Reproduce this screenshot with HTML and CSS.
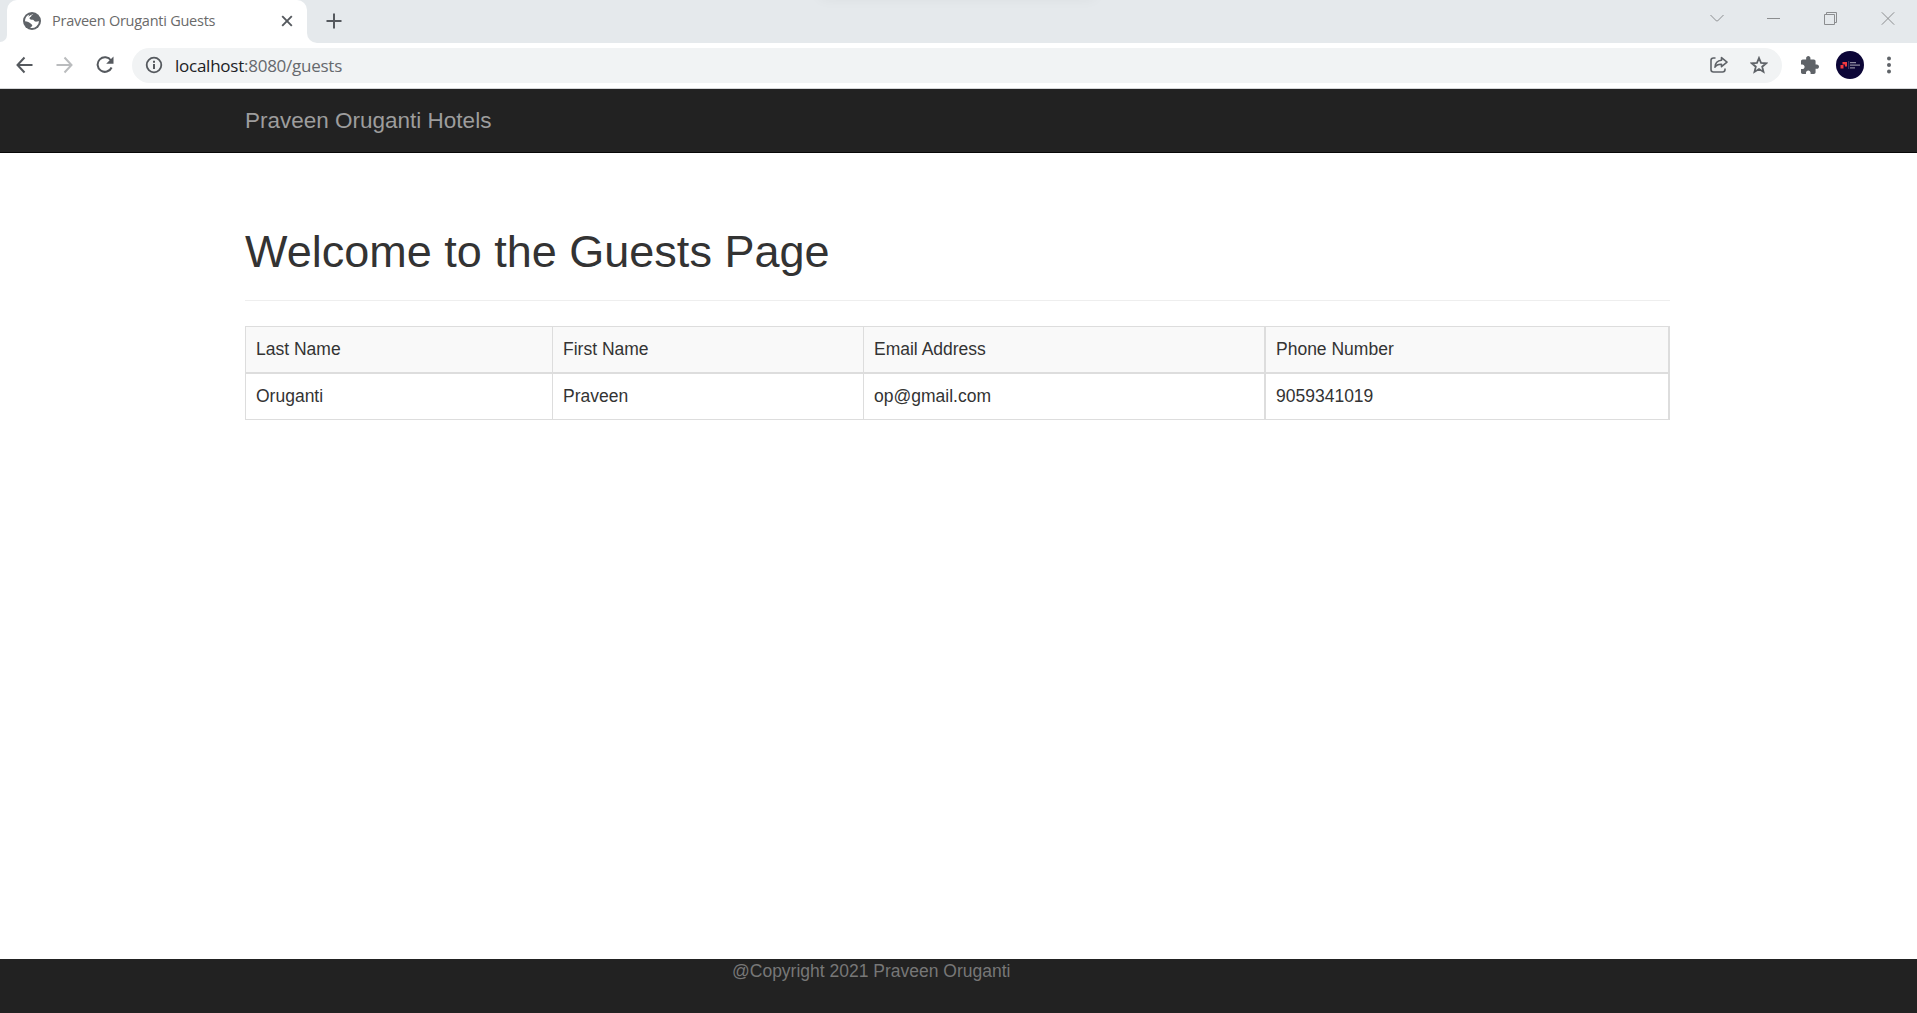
FILE: index.html
```html
<!DOCTYPE html>
<html lang="en">
<head>
<meta charset="utf-8">
<title>Praveen Oruganti Guests</title>
<link rel="stylesheet" href="styles.css">
</head>
<body>
<div class="tabstrip">
  <div class="prev-tab"></div>
  <div class="tab">
    <svg class="globe" width="18" height="18" viewBox="0 0 18 18"><circle cx="9" cy="9" r="9" fill="#5f6368"/><path fill="#fff" d="M10.300 1.900C9.800 3 8.300 2.800 8.200 4.300c0 .9-1.700.6-1.700 1.900 0 1.500 1.900 1.300 3.300 1.500 1.300.2 1.200 1.700 2.500 1.900 1.300.2 2.300-.6 3.700-.4A7.100 7.100 0 0 1 7.400 15.900c0-1.100 1.900-.9 1.900-2.300 0-1.100-.9-1.200-1.700-2.100C6.500 10.200 4.400 9.300 2 9.200 1.900 5.900 3.600 3.400 6.400 2.400L5.200 4.700l2.200-1.400z"/></svg>
    <span class="tab-title">Praveen Oruganti Guests</span>
    <svg class="tab-close" width="12" height="12" viewBox="0 0 12 12"><path d="M1.200 1.200l9.600 9.600M10.800 1.200l-9.600 9.600" stroke="#55595e" stroke-width="1.900"/></svg>
  </div>
  <div class="newtab-area"><svg width="16" height="16" viewBox="0 0 16 16"><path d="M8 .5v15M.5 8h15" stroke="#55595e" stroke-width="2"/></svg></div>
  <div class="window-controls">
    <svg width="14" height="14" viewBox="0 0 14 14"><path d="M.5 4l6 6h1l6-6"/></svg>
    <svg width="14" height="14" viewBox="0 0 14 14"><path d="M0 7.500h13"/></svg>
    <svg width="14" height="14" viewBox="0 0 14 14"><path d="M.5 3.500h10v10h-10zM2.500 3.500v-2h10v10h-2"/></svg>
    <svg width="14" height="14" viewBox="0 0 14 14"><path d="M.8 1.300l12.400 12.400M13.200 1.300L.8 13.700"/></svg>
  </div>
  <div class="top-shadow"></div>
</div>
<div class="toolbar">
  <svg class="back" width="18" height="18" viewBox="0 0 18 18"><path d="M16.500 9H2M8.500 1.500 1.500 9l7 7.500" fill="none" stroke="#55595e" stroke-width="2"/></svg>
  <svg class="forward" width="18" height="18" viewBox="0 0 18 18"><path d="M.5 9H15M8.500 1.500l7 7.500-7 7.500" fill="none" stroke="#babcbe" stroke-width="2"/></svg>
  <svg class="reload" width="18" height="18" viewBox="0 0 18 18"><path d="M15 4.500A7.300 7.300 0 1 0 15.600 11.500" fill="none" stroke="#55595e" stroke-width="2"/><path d="M17.500.500v7.300h-7.300z" fill="#55595e"/></svg>
  <div class="omnibox">
    <svg class="info" width="18" height="18" viewBox="0 0 18 18"><circle cx="9" cy="9" r="7.300" fill="none" stroke="#55595e" stroke-width="1.800"/><path d="M9 8v5M9 4.800v1.900" stroke="#55595e" stroke-width="2"/></svg>
    <span class="url"><b>localhost</b>:8080/guests</span>
    <svg class="share" width="18" height="18" viewBox="0 0 18 18" fill="none" stroke="#5f6368" stroke-width="1.600"><path d="M5.500 2H3.500Q1 2 1 4.500v9Q1 16 3.500 16h9q2.500 0 2.500-2.500v-1"/><path d="M11.500 1.600 17 6.100l-5.500 4.600V8.200Q6.800 8 5 11.200 5.300 4.800 11.500 4.300z" stroke-linejoin="round"/></svg>
    <svg class="star" width="18" height="18" viewBox="0 0 18 18"><path d="M9 2 11 6.900l5.300.4-4.100 3.400 1.300 5.200L9 13.100l-4.500 2.800 1.300-5.200L1.700 7.300 7 6.900z" fill="none" stroke="#5f6368" stroke-width="1.800"/></svg>
  </div>
  <svg class="puzzle" width="18" height="18" viewBox="2 1 21 21"><path fill="#5f6368" d="M20.500 11H19V7c0-1.100-.9-2-2-2h-4V3.500C13 2.120 11.880 1 10.500 1S8 2.120 8 3.500V5H4c-1.100 0-1.990.9-1.990 2v3.800H3.500c1.490 0 2.700 1.210 2.700 2.700s-1.210 2.700-2.700 2.700H2V20c0 1.100.9 2 2 2h3.800v-1.500c0-1.490 1.210-2.700 2.700-2.700 1.490 0 2.700 1.210 2.700 2.700V22H17c1.100 0 2-.9 2-2v-4h1.500c1.380 0 2.500-1.120 2.500-2.500S21.880 11 20.500 11z"/></svg>
  <svg class="avatar" width="28" height="28" viewBox="0 0 28 28"><circle cx="14" cy="14" r="14" fill="#0c0637"/><path d="M6.500 11H11v4.500H8.900v-2.100H6.500zM4.500 14h3v3.500h-3z" fill="#f2383f"/><path d="M12.700 10v8" stroke="#625f80" stroke-width=".7"/><path d="M14 11.600h6M14 14.200h10M14 16.800h5" stroke="#8c89a0" stroke-width="1.200"/></svg>
  <svg class="dots" width="4" height="18" viewBox="0 0 4 18" fill="#5f6368"><circle cx="2" cy="2.500" r="2"/><circle cx="2" cy="9" r="2"/><circle cx="2" cy="15.500" r="2"/></svg>
</div>
<nav class="navbar"><span class="brand">Praveen Oruganti Hotels</span></nav>
<main class="container">
  <h1>Welcome to the Guests Page</h1>
  <table class="guests">
    <colgroup><col class="c1"><col class="c2"><col class="c3"><col class="c4"></colgroup>
    <thead><tr><td>Last Name</td><td>First Name</td><td>Email Address</td><td>Phone Number</td></tr></thead>
    <tbody><tr><td>Oruganti</td><td>Praveen</td><td>op@gmail.com</td><td>9059341019</td></tr></tbody>
  </table>
</main>
<footer class="footer">@Copyright 2021 Praveen Oruganti</footer>
</body>
</html>
```
FILE: styles.css
```css
* { box-sizing: border-box; }
body {
  margin: 0;
  height: 1013px;
  display: flex;
  flex-direction: column;
  overflow: hidden;
  background: #fff;
  color: #333;
  font: 17.5px/25px "Liberation Sans", Arial, sans-serif;
}
svg { display: block; flex: none; }

/* Browser tab strip */
.tabstrip { position: relative; height: 43px; flex: none; display: flex; overflow: hidden; background: #fff; }
.prev-tab { width: 7px; height: 42px; background: #e5e9ec; border-bottom-right-radius: 8px; }
.tab {
  position: relative;
  z-index: 0;
  width: 300px;
  display: flex;
  align-items: center;
  padding: 0 14px 1px 16px;
  background: linear-gradient(#e5e9ec, #e5e9ec) top / 100% 12px no-repeat;
}
.tab::before { content: ""; position: absolute; inset: 0; z-index: -1; background: #fff; border-radius: 10px 10px 0 0; }
.tab-title { flex: 1; margin-left: 11px; padding-bottom: 1px; font: 14.5px/20px "Open Sans", "Noto Sans", sans-serif; color: #6a6a6a; letter-spacing: -.25px; }
.newtab-area { width: 54px; display: flex; align-items: center; padding: 0 0 1px 19px; background: #e5e9ec; border-bottom-left-radius: 10px; }
.window-controls { flex: 1; display: flex; justify-content: flex-end; gap: 43px; padding: 11px 22px 0 0; background: #e5e9ec; }
.window-controls svg { fill: none; stroke: #8b8d8f; stroke-width: 1; }
.top-shadow { position: absolute; left: 820px; top: -12px; width: 275px; height: 10px; box-shadow: 0 0 14px rgba(0, 0, 0, .06); }

/* Address bar */
.toolbar { height: 46px; flex: none; display: flex; align-items: center; padding: 0 26px 1px 16px; border-bottom: 1px solid #d5d6d8; background: #fff; }
.forward { margin-left: 22px; }
.reload { margin-left: 22px; }
.omnibox { flex: 1; height: 35px; display: flex; align-items: center; margin-left: 18px; padding: 0 14px 0 13px; border-radius: 18px; background: #f1f3f4; }
.url { flex: 1; margin-left: 12px; padding-top: 1px; font: 17px/24px "Open Sans", "Noto Sans", sans-serif; color: #66696d; letter-spacing: -.25px; }
.url b { font-weight: 400; color: #202124; }
.star { margin-left: 22px; }
.puzzle { margin-left: 19px; }
.avatar { margin-left: 17px; }
.dots { margin-left: 23px; }

/* Page */
.navbar { height: 64px; flex: none; padding: 18px 245px 0; background: #222; border-bottom: 1px solid #080808; }
.brand { display: block; font-size: 22.5px; line-height: 27px; color: #9d9d9d; }
.container { flex: 1; padding: 72px 247px 0 245px; }
h1 { margin: 0 0 25px; height: 76px; padding-top: 2px; border-bottom: 1px solid #eee; font-weight: 400; font-size: 45px; line-height: 50px; }
.guests { width: 1425px; border: solid #ddd; border-width: 1px 0 0 1px; border-collapse: separate; border-spacing: 0; table-layout: fixed; }
.guests td { height: 46px; padding: 10px 10px 0; vertical-align: top; border: solid #ddd; border-width: 0 1px 1px 0; }
.guests thead td { height: 47px; background: #f9f9f9; border-bottom-width: 2px; }
.guests td:nth-child(n+3) { border-right-width: 2px; }
.c1 { width: 307px; }
.c2 { width: 311px; }
.c3 { width: 402px; }
.c4 { width: 404px; }
.footer { height: 54px; flex: none; padding: 0 732px; background: #222; color: #777; white-space: nowrap; }
```
